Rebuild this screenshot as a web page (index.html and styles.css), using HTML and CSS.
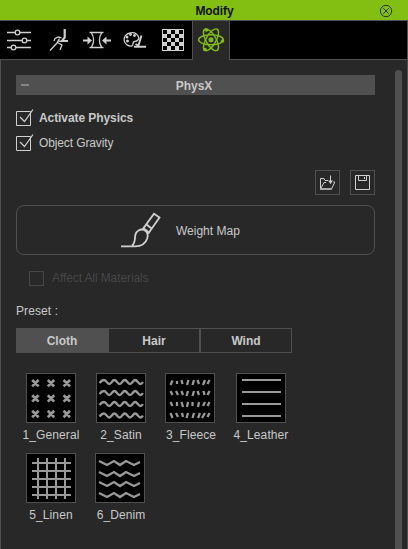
FILE: index.html
```html
<!DOCTYPE html>
<html lang="en">
<head>
<meta charset="utf-8">
<title>Modify</title>
<link rel="stylesheet" href="styles.css">
</head>
<body>
<div class="panel">
  <header class="titlebar">
    <span></span>
    <h1>Modify</h1>
    <svg class="close" width="14" height="14" viewBox="0 0 14 14"><circle cx="7" cy="7" r="5.7"/><path d="M4.3 4.3l5.4 5.4M9.7 4.3L4.3 9.7"/></svg>
  </header>
  <nav class="tabs">
    <div class="tab-list">
      <svg width="193" height="38" viewBox="0 21 193 38">
        <g class="ic">
          <path d="M7 32.5h8M20 32.5h11M7 40.5h15M27 40.5h4M7 47.5h4M16 47.5h15"/>
          <circle cx="17.5" cy="32.5" r="2.3"/><circle cx="24.5" cy="40.5" r="2.3"/><circle cx="13.5" cy="47.5" r="2.3"/>
          <path d="M64.7 29v8.500l-2.700 3.500h6" stroke-width="2.2"/>
          <path d="M54 41l1-2.500 3.500-1.500 3 .8M59.500 38.500l-3 5L50 50.500M57.500 42.500l4.500 2.500-2 5M58.500 41l3 .3"/>
          <path d="M89.500 32.500h14M89.500 47.500h14M91.500 33c3 5 3 9 0 14M101.500 33c-3 5-3 9 0 14"/>
          <path d="M83 40.500h6M104 40.500h7" stroke-width="1.800"/>
          <path class="solid" d="M87.500 36.500l4.500 4-4.500 4zM106.500 36.500l-4.500 4 4.500 4z"/>
          <path d="M139 38c-1.500-4-5-6-9-5-4 .8-6.300 4-5.800 7.500.6 4 4.400 5.800 7.300 5.500 2.200-.3 1-2.800 2-4 1-1.300 4 .8 5.500-4z"/>
          <path d="M141.500 35.500l-3 10-3-1.500M134 46.700h12" stroke-width="1.900"/>
          <g class="solid"><circle cx="127" cy="37" r="1.500"/><circle cx="130.500" cy="34.500" r="1.400"/><circle cx="134.500" cy="35.500" r="1.400"/><circle cx="127.500" cy="41" r="1.500"/></g>
        </g>
        <rect x="162" y="29" width="22" height="22" fill="#d0d0d0"/>
        <path fill="#000" d="M163 30h4v4h-4zM171 30h4v4h-4zM179 30h4v4h-4zM167 34h4v4h-4zM175 34h4v4h-4zM163 38h4v4h-4zM171 38h4v4h-4zM179 38h4v4h-4zM167 42h4v4h-4zM175 42h4v4h-4zM163 46h4v4h-4zM171 46h4v4h-4zM179 46h4v4h-4z"/>
      </svg>
    </div>
    <div class="tab-active">
      <svg width="36" height="39" viewBox="193 21 36 39">
        <g class="atom"><ellipse cx="211" cy="39.800" rx="12.300" ry="5"/><ellipse cx="211" cy="39.800" rx="12.300" ry="5" transform="rotate(60 211 39.800)"/><ellipse cx="211" cy="39.800" rx="12.300" ry="5" transform="rotate(120 211 39.800)"/></g>
        <g fill="#82bf12"><circle cx="211" cy="39.800" r="2.500"/><circle cx="206.500" cy="30" r="1.800"/><circle cx="222.500" cy="41" r="1.800"/><circle cx="205" cy="49.500" r="1.800"/></g>
      </svg>
    </div>
    <div class="tab-rest"></div>
  </nav>
  <div class="body">
    <main class="content">
      <div class="section"><i></i><h2>PhysX</h2></div>
      <div class="check first bold"><svg width="18" height="17" viewBox="0 0 18 17"><path class="ln" d="M.5 2.500h14v14H.5z"/><path class="tick" d="M4 8l4.500 4.500L17 .5"/></svg><span class="t-act">Activate Physics</span></div>
      <div class="check"><svg width="18" height="17" viewBox="0 0 18 17"><path class="ln" d="M.5 2.500h14v14H.5z"/><path class="tick" d="M4 8l4.500 4.500L17 .5"/></svg><span class="t-obj">Object Gravity</span></div>
      <div class="files">
        <div class="file"><svg width="23" height="23" viewBox="0 0 23 23"><path class="ln" d="M4.500 18V7.500H8l1 2h3M4.500 18L8 11.500h2"/><path d="M4.500 18h11l3.300-7h-1.500" class="ln"/><path d="M4 18h11.500" stroke="#aaa" stroke-width="2"/><path d="M14.500 4.500v8" stroke="#d0d0d0"/><path d="M12 9.500h5L14.500 13z" fill="#d0d0d0"/></svg></div>
        <div class="file"><svg width="23" height="23" viewBox="0 0 23 23"><path class="ln" d="M4.500 4.500h14v14h-14zM7.500 5v4.500h8V5M13.500 6v2"/></svg></div>
      </div>
      <div class="weight">
        <svg width="40" height="36" viewBox="0 0 40 36"><g class="brush"><path d="M33 1.800l5.500 3.700L28 20.500l-5.500-4.300zM25.300 12.300l5.200 4.200"/><path d="M11 33.500c3.500-2.500 2.800-7 3.300-10.500.6-4 5-6.500 8.700-5 3.500 1.500 4.200 4.800 3.200 8.500C24.500 32 20 34.300 14 34.300H0M22.500 16.200l-1 1.500M28 20.500l-2 1.500"/></g></svg>
        <span class="t-weight">Weight Map</span>
      </div>
      <div class="affect"><i></i><span class="t-affect">Affect All Materials</span></div>
      <div class="preset">Preset :</div>
      <div class="segments"><div class="on">Cloth</div><div>Hair</div><div>Wind</div></div>
      <div class="grid">
        <figure><svg class="tile" viewBox="0 0 48 48"><path d="M5.200 6l6.400 6.400M11.600 6l-6.400 6.400M20.800 6l6.400 6.400M27.200 6l-6.400 6.400M36.600 6l6.400 6.400M43 6l-6.400 6.400M5.200 21.200l6.400 6.400M11.600 21.200l-6.400 6.400M20.800 21.200l6.400 6.400M27.200 21.200l-6.400 6.400M36.600 21.200l6.400 6.400M43 21.200l-6.400 6.400M5.200 36.800l6.400 6.400M11.600 36.800l-6.400 6.400M20.800 36.800l6.400 6.400M27.200 36.800l-6.400 6.400M36.600 36.800l6.400 6.400M43 36.800l-6.400 6.400" stroke-width="2.700"/></svg><figcaption>1_General</figcaption></figure>
        <figure><svg class="tile wavy" viewBox="0 0 48 48"><path d="M2.500 9q2.200-3 4.500-3c2.500 0 3 4 5.200 4s3-4 5.200-4 3 4 5.200 4 3-4 5.200-4 3 4 5.200 4 3-4 5.200-4 3 4 5.200 4q1.500 0 2.500-2M2.500 20q2.200-3 4.500-3c2.500 0 3 4 5.200 4s3-4 5.200-4 3 4 5.200 4 3-4 5.200-4 3 4 5.200 4 3-4 5.200-4 3 4 5.200 4q1.500 0 2.500-2M2.500 31q2.200-3 4.500-3c2.500 0 3 4 5.200 4s3-4 5.200-4 3 4 5.200 4 3-4 5.200-4 3 4 5.200 4 3-4 5.200-4 3 4 5.200 4q1.500 0 2.500-2M2.500 42.500q2.200-3 4.500-3c2.500 0 3 4 5.200 4s3-4 5.200-4 3 4 5.200 4 3-4 5.200-4 3 4 5.200 4 3-4 5.200-4 3 4 5.200 4q1.500 0 2.500-2"/></svg><figcaption>2_Satin</figcaption></figure>
        <figure class="third"><svg class="tile wavy" viewBox="0 0 48 48"><path d="M6.500 6.500l-2 4.500M11 7v3M15.500 6l1 4M22.500 6l-1.500 5M28 6l-1.500 5M31.500 6l1.500 4M39 6l-2 5M43.500 6l-2 4M4.500 17l2 4M10 17l2 4M15.500 17l1.500 4M22 17l-1.500 5M28 17l-1.500 5M31.500 17l1.500 4M37.500 17l1 4M43.500 17l-2 4M4.500 28l2 4M11 28v4M15.500 28l1.500 5M22 28l-1 5M26.500 28v4M33 28l-1 5M39 28l-2 4M43.500 28l-2 4M4.500 39l2 5M10 39l2 4M16 39l1 4M22 39l-1.500 5M28 39l-1.500 5M34 39l-2 5M39 39l-3 5M43.500 39l-2 4"/></svg><figcaption>3_Fleece</figcaption></figure>
        <figure><svg class="tile" viewBox="0 0 48 48"><path d="M5 6h39M5 18h39M5 30h39M5 42h39"/></svg><figcaption>4_Leather</figcaption></figure>
        <figure><svg class="tile" viewBox="0 0 48 48"><path d="M5 9h39M5 17h39M5 25h39M5 33h39M5 41h39M11 4v41M20 4v41M29 4v41M38 4v41"/></svg><figcaption>5_Linen</figcaption></figure>
        <figure class="sixth"><svg class="tile wavy" viewBox="0 0 48 48"><path d="M3 7l8 4 7-4 6 4 6-4 8 4 6-3M3 18l8 4 7-4 6 4 6-4 8 4 6-3M3 28l8 4 7-4 6 4 6-4 8 4 6-3M3 39l8 4 7-4 6 4 6-4 8 4 6-3"/></svg><figcaption>6_Denim</figcaption></figure>
      </div>
    </main>
    <div class="scroll"></div>
  </div>
</div>
</body>
</html>
```
FILE: styles.css
```css
* { box-sizing: border-box; }
html, body { margin: 0; height: 100%; background: #282828; overflow: hidden; }
body { font: 12px/14px "Liberation Sans", Arial, sans-serif; color: #c8c8c8; }
h1, h2, figure { margin: 0; font-size: 12px; line-height: 14px; }
svg { display: block; fill: none; flex: none; }
.panel { width: 408px; height: 549px; display: flex; flex-direction: column; }
.titlebar { height: 20px; background: #82bf12; color: #111; display: grid; grid-template-columns: 1fr auto 1fr; align-items: center; padding: 1px 15px 0 36px; }
.titlebar h1 { letter-spacing: -.1px; }
.close { justify-self: end; stroke: #26380a; }
.tabs { height: 40px; display: flex; border-top: 1px solid #505050; border-right: 1px solid #505050; }
.tab-list { width: 193px; background: #000; border-right: 1px solid #505050; border-bottom: 1px solid #505050; overflow: hidden; }
.tab-active { width: 36px; }
.tab-rest { flex: 1; background: #000; border-left: 1px solid #505050; border-bottom: 1px solid #505050; }
.ic { stroke: #d0d0d0; stroke-width: 1.3; }
.solid { fill: #d0d0d0; stroke: none; }
.atom { stroke: #82bf12; stroke-width: 1.4; }
.body { flex: 1; display: flex; border: solid #505050; border-width: 0 1px; padding-right: 5px; }
.content { width: 359px; margin-left: 15px; padding-top: 15px; }
.section { height: 20px; background: #505050; display: flex; align-items: center; position: relative; justify-content: center; }
.section h2 { padding: 1px 3px 0 0; }
.section i { position: absolute; left: 5px; top: 9px; width: 8px; height: 2px; background: #858585; }
.check { height: 17px; margin-top: 8px; display: flex; gap: 5px; }
.check.first { margin-top: 14px; }
.check span { padding-top: 2px; }
.bold { font-weight: bold; }
.t-act { letter-spacing: -.08px; }
.t-obj { letter-spacing: -.12px; }
.ln { stroke: #d0d0d0; }
.tick { stroke: #d0d0d0; stroke-width: 1.2; }
.files { display: flex; gap: 10px; justify-content: flex-end; margin-top: 19px; }
.file { width: 25px; height: 25px; border: 1px solid #505050; }
.weight { margin-top: 10px; height: 50px; border: 1px solid #505050; border-radius: 8px; display: flex; align-items: center; padding-left: 104px; gap: 15px; }
.weight span { padding-top: 1px; }
.brush { stroke: #d0d0d0; stroke-width: 1.8; }
.affect { margin: 16px 0 0 13px; height: 15px; display: flex; gap: 8px; color: #464646; }
.affect i { width: 15px; height: 15px; border: 1px solid #464646; }
.t-affect { letter-spacing: -.1px; }
.preset { margin-top: 18px; letter-spacing: .1px; }
.segments { margin-top: 10px; width: 276px; height: 25px; display: flex; font-weight: bold; text-align: center; line-height: 25px; border: 1px solid #505050; }
.segments div { flex: 1; border-right: 2px solid #505050; height: 23px; }
.segments div:first-child { flex: 0 0 92px; background: #505050; line-height: 24px; border: 0; padding-right: 2px; }
.segments div:last-child { flex: 0 0 90px; border: 0; }
.grid { display: grid; grid-template-columns: repeat(4, 70px); grid-auto-rows: 80px; margin-top: 20px; }
figure { text-align: center; white-space: nowrap; }
.tile { width: 50px; height: 50px; margin: 0 auto; background: #000; border: 1px solid #505050; stroke: #999; stroke-width: 2; }
.wavy { stroke-width: 2.3; }
.third .tile, .sixth .tile { margin-left: 9px; }
figcaption { padding-top: 5px; letter-spacing: .1px; }
.scroll { width: 7px; margin: 10px 0 0 auto; background: #505050; border-radius: 4px 4px 0 0; }
```
